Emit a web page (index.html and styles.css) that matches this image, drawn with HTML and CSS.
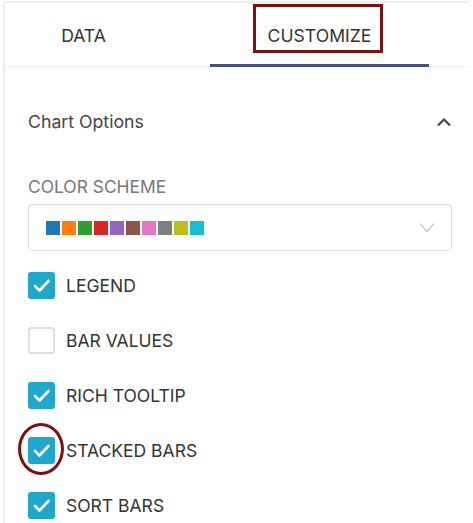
FILE: index.html
```html
<!DOCTYPE html>
<html>
<head>
<meta charset="utf-8">
<link rel="stylesheet" href="styles.css">
</head>
<body>
<div class="panel">
  <div class="tabs">
    <div class="tab tab-data">DATA</div>
    <div class="tab tab-active">CUSTOMIZE<span class="mark-box"></span></div>
  </div>
  <div class="content">
    <div class="section-header">
      <span class="section-title">Chart Options</span>
      <svg class="chev-up" width="16" height="10" viewBox="0 0 16 10"><path d="M2 8.5 L8 2.5 L14 8.5" fill="none" stroke="#444" stroke-width="2.2"/></svg>
    </div>
    <div class="control-label">COLOR SCHEME</div>
    <div class="select">
      <div class="swatches">
        <span class="sw c1"></span><span class="sw c2"></span><span class="sw c3"></span><span class="sw c4"></span><span class="sw c5"></span><span class="sw c6"></span><span class="sw c7"></span><span class="sw c8"></span><span class="sw c9"></span><span class="sw c10"></span>
      </div>
      <svg class="chev-down" width="16" height="11" viewBox="0 0 16 11"><path d="M1 1.5 L8 9.5 L15 1.5" fill="none" stroke="#c8c8c8" stroke-width="1.3"/></svg>
    </div>
    <div class="checks">
      <div class="check-row"><span class="cb on"><svg width="27" height="27" viewBox="0 0 27 27"><path d="M7 14 L11.5 18.5 L20.5 9" fill="none" stroke="#fff" stroke-width="2.6" stroke-linecap="round" stroke-linejoin="round"/></svg></span><span class="cb-label">LEGEND</span></div>
      <div class="check-row"><span class="cb off"></span><span class="cb-label">BAR VALUES</span></div>
      <div class="check-row"><span class="cb on"><svg width="27" height="27" viewBox="0 0 27 27"><path d="M7 14 L11.5 18.5 L20.5 9" fill="none" stroke="#fff" stroke-width="2.6" stroke-linecap="round" stroke-linejoin="round"/></svg></span><span class="cb-label">RICH TOOLTIP</span></div>
      <div class="check-row"><span class="cb on"><svg width="27" height="27" viewBox="0 0 27 27"><path d="M7 14 L11.5 18.5 L20.5 9" fill="none" stroke="#fff" stroke-width="2.6" stroke-linecap="round" stroke-linejoin="round"/></svg><span class="mark-circle"></span></span><span class="cb-label">STACKED BARS</span></div>
      <div class="check-row"><span class="cb on"><svg width="27" height="27" viewBox="0 0 27 27"><path d="M7 14 L11.5 18.5 L20.5 9" fill="none" stroke="#fff" stroke-width="2.6" stroke-linecap="round" stroke-linejoin="round"/></svg></span><span class="cb-label">SORT BARS</span></div>
    </div>
  </div>
</div>
</body>
</html>
```
FILE: styles.css
```css
html, body {
  margin: 0;
  padding: 0;
  background: #fff;
  overflow: hidden;
}
body {
  font-family: Inter, "Liberation Sans", sans-serif;
  color: #333;
}
.panel {
  margin: 1px 4px 0 3px;
  border-top: 2px solid #efefef;
  border-left: 2px solid #efefef;
  height: 540px;
}
.tabs {
  display: flex;
  height: 63px;
  border-bottom: 1px solid #f0f0f0;
}
.tab {
  font-size: 17.6px;
  color: #333;
  display: flex;
  align-items: center;
  justify-content: center;
  height: 63px;
  padding-top: 1px;
  box-sizing: border-box;
}
.tab-data {
  width: 157px;
  margin-right: 48px;
}
.tab-active {
  width: 219px;
  position: relative;
  border-bottom: 3px solid #474f80;
  height: 64px;
  margin-bottom: -1px;
  padding-top: 3px;
}
.mark-box {
  position: absolute;
  left: 43px;
  top: 1px;
  width: 130px;
  height: 49px;
  box-sizing: border-box;
  border: 3px solid #7d1015;
}
.content {
  padding: 26px 17px 0 23px;
}
.section-header {
  height: 56px;
  display: flex;
  align-items: center;
  justify-content: space-between;
}
.section-title {
  font-size: 17.7px;
  color: #444;
}
.chev-up {
  margin-top: 2px;
}
.control-label {
  margin-top: 28px;
  font-size: 17.4px;
  line-height: 20px;
  color: #777;
}
.select {
  margin-top: 7px;
  height: 47px;
  box-sizing: border-box;
  border: 1px solid #ddd;
  border-radius: 4px;
  display: flex;
  align-items: center;
  justify-content: space-between;
  padding: 0 16px 0 17px;
}
.swatches {
  display: flex;
  gap: 2px;
}
.sw {
  width: 14px;
  height: 14px;
  display: block;
}
.c1 { background: #1f77b4; }
.c2 { background: #ff7f0e; }
.c3 { background: #2ca02c; }
.c4 { background: #d62728; }
.c5 { background: #9467bd; }
.c6 { background: #8c564b; }
.c7 { background: #e377c2; }
.c8 { background: #7f7f7f; }
.c9 { background: #bcbd22; }
.c10 { background: #17becf; }
.checks {
  margin-top: 7px;
}
.check-row {
  height: 55px;
  display: flex;
  align-items: center;
}
.cb {
  width: 27px;
  height: 27px;
  box-sizing: border-box;
  border-radius: 3px;
  position: relative;
  display: block;
  flex: none;
}
.cb svg {
  display: block;
}
.cb.on {
  background: #20a7c9;
}
.cb.off {
  border: 2px solid #dedede;
  background: #fff;
}
.cb-label {
  margin-left: 11px;
  font-size: 17.5px;
  color: #333;
}
.mark-circle {
  position: absolute;
  left: -10px;
  top: -14px;
  width: 46px;
  height: 52px;
  box-sizing: border-box;
  border: 3px solid #7d1015;
  border-radius: 50%;
}
```
